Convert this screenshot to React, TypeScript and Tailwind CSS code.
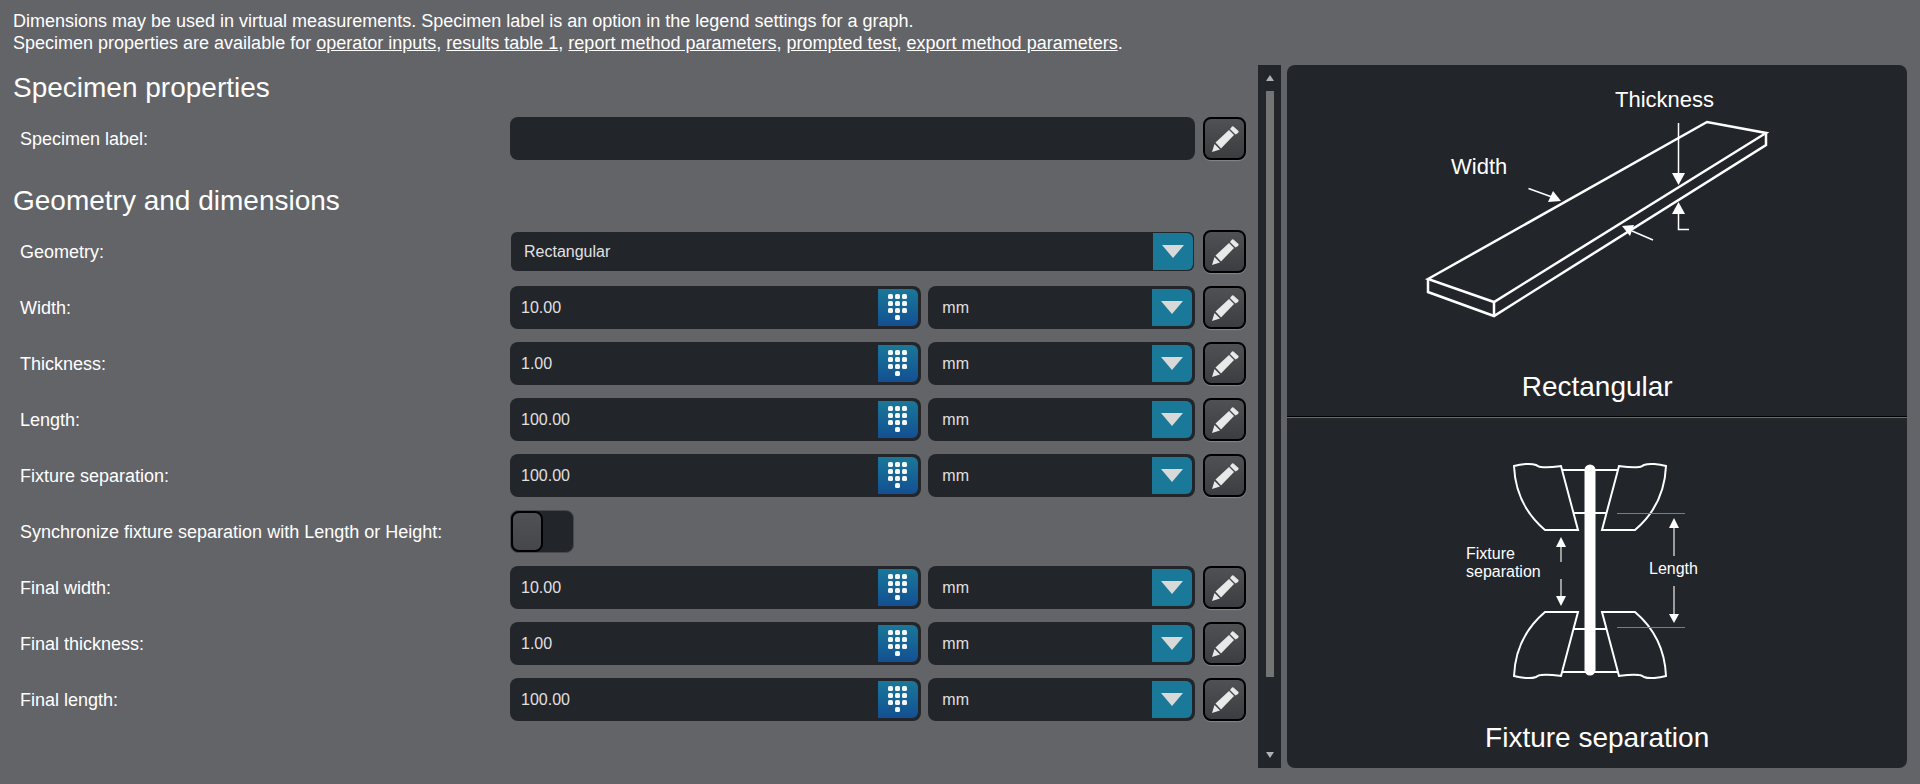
import { useState } from 'react'
import type { ReactNode } from 'react'

interface Dimension {
  id: string
  label: string
  value: string
}

const dimensions: Dimension[] = [
  { id: 'width', label: 'Width:', value: '10.00' },
  { id: 'thickness', label: 'Thickness:', value: '1.00' },
  { id: 'length', label: 'Length:', value: '100.00' },
  { id: 'fixture-separation', label: 'Fixture separation:', value: '100.00' },
]

const finalDimensions: Dimension[] = [
  { id: 'final-width', label: 'Final width:', value: '10.00' },
  { id: 'final-thickness', label: 'Final thickness:', value: '1.00' },
  { id: 'final-length', label: 'Final length:', value: '100.00' },
]

const links = ['operator inputs', 'results table 1', 'report method parameters', 'prompted test', 'export method parameters']

function Row({ id, label, children }: { id: string; label: string; children: ReactNode }) {
  return (
    <div className="grid grid-cols-[497px_minmax(0,1fr)] items-center">
      <label htmlFor={id} className="pl-[7px]">{label}</label>
      <div className="flex h-[43px] items-center gap-2">{children}</div>
    </div>
  )
}

function EditButton({ label }: { label: string }) {
  return (
    <button
      type="button"
      aria-label={`Edit ${label}`}
      className="flex h-[43px] w-[43px] shrink-0 items-center justify-center rounded-lg border-2 border-black bg-linear-to-b from-[#505155] to-[#3c3d40] shadow-[0_1px_1px_#85868a]"
    >
      <svg width="30" height="30" viewBox="0 0 30 30" fill="#e8e9e9">
        <path d="M2 28 L4.500 20 L10 25.500 Z" />
        <path d="M5.500 18.500 L19 6 L24 11 L11 24.500 Z" />
        <path d="M20 5 L22 2.500 Q23 2 24 3 L28.500 7 Q29 8 28 9 L25.500 10.500 Z" />
      </svg>
    </button>
  )
}

function Arrow() {
  return (
    <svg width="22" height="13" viewBox="0 0 22 13" fill="#d9d9d9">
      <path d="M0 0 H22 L11 13 Z" />
    </svg>
  )
}

function UnitSelect({ label }: { label: string }) {
  return (
    <div className="grid h-[43px] w-[267px] shrink-0 items-center rounded-lg bg-[#22252a] pr-[3px]">
      <select aria-label={`${label} unit`} className="col-start-1 row-start-1 h-full w-full appearance-none rounded-lg bg-transparent pl-[14px] text-base text-[#e0e0e0]">
        <option>mm</option>
        <option>cm</option>
        <option>in</option>
      </select>
      <span className="pointer-events-none col-start-1 row-start-1 flex h-[37px] w-10 items-center justify-center justify-self-end rounded-r-md bg-[#1a7899]">
        <Arrow />
      </span>
    </div>
  )
}

function KeypadIcon() {
  return (
    <svg width="40" height="37" viewBox="0 0 40 37" fill="#f4f6f8">
      {[5, 12, 19].map(y => [10, 17, 24].map(x => (
        <rect key={`${x}-${y}`} x={x} y={y} width="5" height="5" rx="1.5" />
      )))}
      <rect x="17" y="26" width="5" height="5" rx="1.5" />
    </svg>
  )
}

function DimensionRow({ dimension }: { dimension: Dimension }) {
  const { id, label } = dimension
  const [value, setValue] = useState(dimension.value)

  return (
    <Row id={id} label={label}>
      <div className="flex min-w-0 flex-1 gap-[7px]">
        <div className="flex h-[43px] min-w-0 flex-1 items-center rounded-lg bg-[#22252a] pr-[3px]">
          <input
            id={id}
            type="text"
            value={value}
            onChange={e => setValue(e.target.value)}
            className="h-full min-w-0 flex-1 rounded-lg bg-transparent pl-[11px] text-base text-[#e0e0e0]"
          />
          <button type="button" aria-label={`${label} keypad`} className="h-[37px] w-10 shrink-0 rounded-r-md bg-linear-to-b from-[#1a7899] to-[#144f92]">
            <KeypadIcon />
          </button>
        </div>
        <UnitSelect label={label} />
      </div>
      <EditButton label={label} />
    </Row>
  )
}

function RectangularDiagram() {
  return (
    <svg viewBox="0 0 400 306" className="w-[400px] max-w-full" fill="none" stroke="white" strokeWidth="2.5">
      <path d="M31 214 L310 57 L369 68 L97 237 Z" />
      <path d="M31 214 V227 L97 251 L369 80 V68 M97 237 V251" />
      <g strokeWidth="1.5">
        <path d="M131.5 123.5 L155 132" />
        <path d="M256 175 L235 166" />
        <path d="M281.5 58 V109" />
        <path d="M281.5 148 V164.500 H292" />
      </g>
      <g fill="white" stroke="none">
        <path d="M164 136 L151 137 L156 126 Z" />
        <path d="M225 161 L237 160 L233 171 Z" />
        <path d="M275 108 H288 L281.500 120 Z" />
        <path d="M275 149 H288 L281.500 137 Z" />
        <text x="54" y="109" fontSize="22">Width</text>
        <text x="218" y="42" fontSize="22">Thickness</text>
      </g>
    </svg>
  )
}

const grip = 'M117 48 C124 46 134 45 139 47 C141 48 142 49 144 49 C151 50 157 49 164 48 L181 112 H148 C128 95 118 72 117 48 Z'

function Grips() {
  return (
    <g>
      <path d={grip} />
      <path d={grip} transform="matrix(-1 0 0 1 386 0)" />
      <path d="M165 52 H221 M177 95 H209" />
    </g>
  )
}

function FixtureDiagram() {
  return (
    <svg viewBox="0 0 400 300" className="w-[400px] max-w-full" fill="none" stroke="white" strokeWidth="2">
      <Grips />
      <g transform="matrix(1 0 0 -1 0 306)">
        <Grips />
      </g>
      <path d="M193 52 V252" strokeWidth="11" strokeLinecap="round" />
      <path d="M220 95.500 H288 M220 209.500 H288" stroke="#7b7d80" strokeWidth="1" />
      <path d="M277 109 V138 M277 168 V197 M164 128 V144 M164 161 V179" stroke="#c4c5c6" strokeWidth="1.500" />
      <g fill="white" stroke="none">
        <path d="M277 100 L282 110 H272 Z" />
        <path d="M277 205 L282 196 H272 Z" />
        <path d="M164 119 L169 129 H159 Z" />
        <path d="M164 188 L169 178 H159 Z" />
        <text x="69" y="141" fontSize="16">Fixture</text>
        <text x="69" y="159" fontSize="16">separation</text>
        <text x="252" y="156" fontSize="16">Length</text>
      </g>
    </svg>
  )
}

export default function App() {
  const [specimenLabel, setSpecimenLabel] = useState('')
  const [synced, setSynced] = useState(false)

  return (
    <div className="flex min-h-screen flex-col bg-[#636468] px-[13px] pt-[10px] pb-4 font-['Liberation_Sans',Arial,sans-serif] text-[18px] leading-[22px] text-white">
      <header className="mb-[11px]">
        <p>Dimensions may be used in virtual measurements. Specimen label is an option in the legend settings for a graph.</p>
        <p>
          Specimen properties are available for{' '}
          {links.map((link, i) => (
            <span key={link}>
              <a href="#" className="underline">{link}</a>
              {i < links.length - 1 ? ', ' : '.'}
            </span>
          ))}
        </p>
      </header>

      <main className="grid flex-1 grid-cols-[minmax(0,2fr)_23px_minmax(0,1fr)] gap-x-[6px]">
        <form className="pr-[6px]" onSubmit={e => e.preventDefault()}>
          <h2 className="mb-[6px] text-[28px] leading-[46px]">Specimen properties</h2>
          <Row id="specimen-label" label="Specimen label:">
            <input
              id="specimen-label"
              type="text"
              value={specimenLabel}
              onChange={e => setSpecimenLabel(e.target.value)}
              className="h-[43px] min-w-0 flex-1 rounded-lg bg-[#22252a] px-[11px] text-base"
            />
            <EditButton label="Specimen label" />
          </Row>

          <h2 className="mt-[18px] mb-[6px] text-[28px] leading-[46px]">Geometry and dimensions</h2>
          <div className="flex flex-col gap-[13px]">
            <Row id="geometry" label="Geometry:">
              <div className="mx-px grid h-[39px] min-w-0 flex-1 items-center rounded-md bg-[#22252a] pr-px">
                <select id="geometry" className="col-start-1 row-start-1 h-full w-full appearance-none rounded-md bg-transparent pl-[13px] text-base text-[#e0e0e0]">
                  <option>Rectangular</option>
                  <option>Circular</option>
                </select>
                <span className="pointer-events-none col-start-1 row-start-1 flex h-[37px] w-10 items-center justify-center justify-self-end rounded-r-md bg-[#1a7899]">
                  <Arrow />
                </span>
              </div>
              <EditButton label="Geometry" />
            </Row>
            {dimensions.map(d => <DimensionRow key={d.id} dimension={d} />)}
            <Row id="sync" label="Synchronize fixture separation with Length or Height:">
              <input
                id="sync"
                type="checkbox"
                role="switch"
                checked={synced}
                onChange={e => setSynced(e.target.checked)}
                className="flex h-[43px] w-16 appearance-none rounded-lg border border-[#48494c] bg-[#22252a] before:h-full before:w-8 before:rounded-lg before:border-2 before:border-black before:bg-linear-to-b before:from-[#505155] before:to-[#46474a] checked:justify-end"
              />
            </Row>
            {finalDimensions.map(d => <DimensionRow key={d.id} dimension={d} />)}
          </div>
        </form>

        {/* Scroll bar */}
        <div className="flex flex-col items-center bg-[#22252a]">
          <button type="button" aria-label="Scroll up" className="flex h-[26px] w-full items-center justify-center">
            <svg width="8" height="6" viewBox="0 0 8 6" fill="#b0b1b2"><path d="M4 0 L8 6 H0 Z" /></svg>
          </button>
          <div className="flex w-full flex-1 justify-center">
            <div className="h-[90%] w-2 bg-[#737474]" />
          </div>
          <button type="button" aria-label="Scroll down" className="flex h-[26px] w-full items-center justify-center">
            <svg width="8" height="6" viewBox="0 0 8 6" fill="#b0b1b2"><path d="M0 0 H8 L4 6 Z" /></svg>
          </button>
        </div>

        <aside className="flex flex-col rounded-lg bg-[#22252a]">
          <figure className="flex flex-col items-center border-b border-black pb-[13px]">
            <RectangularDiagram />
            <figcaption className="text-[28px] leading-8">Rectangular</figcaption>
          </figure>
          <figure className="flex flex-1 flex-col items-center border-t border-[#6a6b6e]">
            <FixtureDiagram />
            <figcaption className="mt-1 text-[28px] leading-8">Fixture separation</figcaption>
          </figure>
        </aside>
      </main>
    </div>
  )
}
